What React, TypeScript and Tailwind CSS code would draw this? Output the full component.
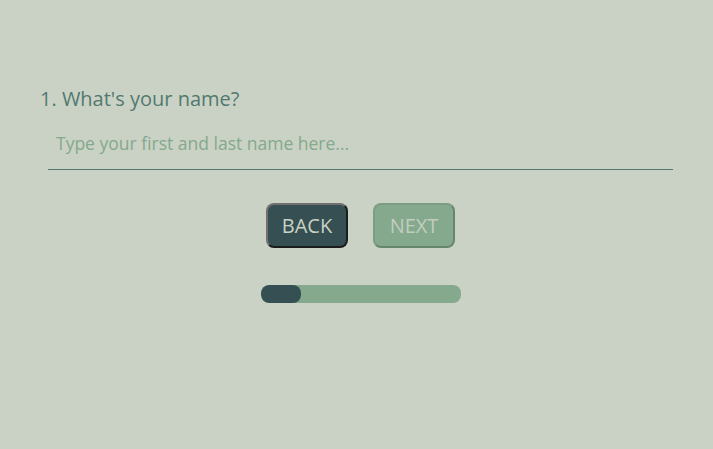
import { useState } from 'react';

export default function App() {
  const [name, setName] = useState('');
  const step = 1;
  const total = 5;

  return (
    <div className="min-h-screen w-full bg-[#cad2c5] font-['Open_Sans',sans-serif]">
      <div className="px-10 pt-[84px]">
        {/* Question */}
        <label htmlFor="name" className="block text-[20px] leading-[30px] text-[#52796f]">
          {step}. What's your name?
        </label>
        <input
          id="name"
          value={name}
          onChange={(e) => setName(e.target.value)}
          placeholder="Type your first and last name here..."
          className="mt-[17px] ml-2 block w-[625px] border-b border-[#52796f] bg-transparent px-2 pb-[14px] text-[17.5px] leading-[24px] text-[#354f52] placeholder:text-[#84a98c] outline-none"
        />

        {/* Navigation */}
        <div className="mt-[33px] flex justify-center gap-[25px] pl-2">
          <button className="h-[45px] w-[82px] rounded-lg border-2 border-t-[#707070] border-l-[#707070] border-b-[#1c1c1c] border-r-[#1c1c1c] bg-[#354f52] text-[20px] text-[#cad2c5]">
            BACK
          </button>
          <button className="h-[45px] w-[82px] rounded-lg border-2 border-t-[#7d9d83] border-l-[#7d9d83] border-b-[#66876e] border-r-[#66876e] bg-[#84a98c] text-[20px] text-[#c2cdbf]">
            NEXT
          </button>
        </div>

        {/* Progress */}
        <div className="mt-[37px] flex justify-center pl-2">
          <div className="h-[18px] w-[200px] overflow-hidden rounded-lg bg-[#84a98c]">
            <div className="h-full rounded-lg bg-[#354f52]" style={{ width: `${(step / total) * 100}%` }} />
          </div>
        </div>
      </div>
    </div>
  );
}
